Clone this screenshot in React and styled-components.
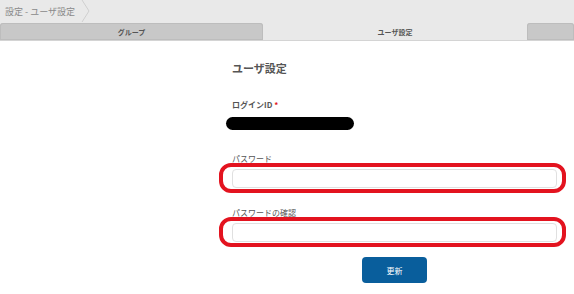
import React from 'react'
import styled, { createGlobalStyle } from 'styled-components'

const GlobalStyle = createGlobalStyle`
  html, body {
    margin: 0;
    padding: 0;
    background: #ffffff;
  }
  body {
    font-family: "Noto Sans CJK JP", "Noto Sans", "Liberation Sans", sans-serif;
  }
`

const Page = styled.div`
  width: 574px;
  height: 294px;
  overflow: hidden;
  background: #fff;
`

const Header = styled.div`
  background: #e9e9e9;
`

const Crumbs = styled.div`
  height: 22px;
  display: flex;
  align-items: center;
  padding-left: 5px;
`

const CrumbText = styled.span`
  font-size: 9px;
  color: #8a8a8a;
`

const Chevron = styled.svg`
  margin-left: 6px;
  width: 9px;
  height: 22px;
`

const Tabs = styled.div`
  display: flex;
  align-items: flex-end;
  height: 18px;
  border-bottom: 1px solid #d4d4d4;
`

const Tab = styled.div`
  width: ${(p) => p.$w}px;
  height: 17px;
  display: flex;
  align-items: center;
  justify-content: center;
  font-size: 7px;
  font-weight: 700;
  color: #555;
  background: ${(p) => (p.$active ? '#e9e9e9' : '#c8c8c8')};
  border-radius: 3px 3px 0 0;
  box-shadow: ${(p) => (p.$active ? 'none' : 'inset 0 0 0 1px #bdbdbd')};
`

const Main = styled.div`
  width: 325px;
  margin-left: 232px;
  padding-top: 19px;
`

const Title = styled.h2`
  margin: 0;
  font-size: 11px;
  font-weight: 700;
  color: #555;
  line-height: 16px;
`

const Label = styled.div`
  margin-top: ${(p) => p.$mt}px;
  font-size: 8px;
  font-weight: ${(p) => (p.$bold ? 700 : 400)};
  color: #555;
  line-height: 11px;
`

const Req = styled.span`
  color: #e0141e;
  margin-left: 2px;
`

const Redacted = styled.div`
  margin-top: 7px;
  margin-left: -6px;
  width: 128px;
  height: 13px;
  border-radius: 7px;
  background: #000;
`

const Highlight = styled.div`
  margin-top: -1px;
  margin-left: -13px;
  width: 347px;
  box-sizing: border-box;
  border: 4px solid #e3131f;
  border-radius: 12px;
  padding: 2px 5px 1px 9px;
`

const Input = styled.input`
  display: block;
  box-sizing: border-box;
  width: 325px;
  height: 19px;
  margin: 0;
  border: 1px solid #e0e0e0;
  border-radius: 4px;
  background: #fff;
  outline: none;
`

const Actions = styled.div`
  display: flex;
  margin-top: 10px;
  padding-left: 130px;
`

const Button = styled.button`
  width: 65px;
  height: 26px;
  border: none;
  border-radius: 4px;
  background: #095e9c;
  color: #fff;
  font-family: inherit;
  font-size: 8px;
`

export default function App() {
  return (
    <Page>
      <GlobalStyle />
      <Header>
        <Crumbs>
          <CrumbText>設定 - ユーザ設定</CrumbText>
          <Chevron viewBox="0 0 9 22">
            <polyline points="1,0 8,11 1,22" fill="none" stroke="#cfcfcf" strokeWidth="1" />
          </Chevron>
        </Crumbs>
        <Tabs>
          <Tab $w={263}>グループ</Tab>
          <Tab $w={264} $active>ユーザ設定</Tab>
          <Tab $w={47} />
        </Tabs>
      </Header>
      <Main>
        <Title>ユーザ設定</Title>
        <Label $mt={23} $bold>
          ログインID<Req>*</Req>
        </Label>
        <Redacted />
        <Label $mt={23}>パスワード</Label>
        <Highlight>
          <Input type="password" />
        </Highlight>
        <Label $mt={14}>パスワードの確認</Label>
        <Highlight>
          <Input type="password" />
        </Highlight>
        <Actions>
          <Button>更新</Button>
        </Actions>
      </Main>
    </Page>
  )
}
